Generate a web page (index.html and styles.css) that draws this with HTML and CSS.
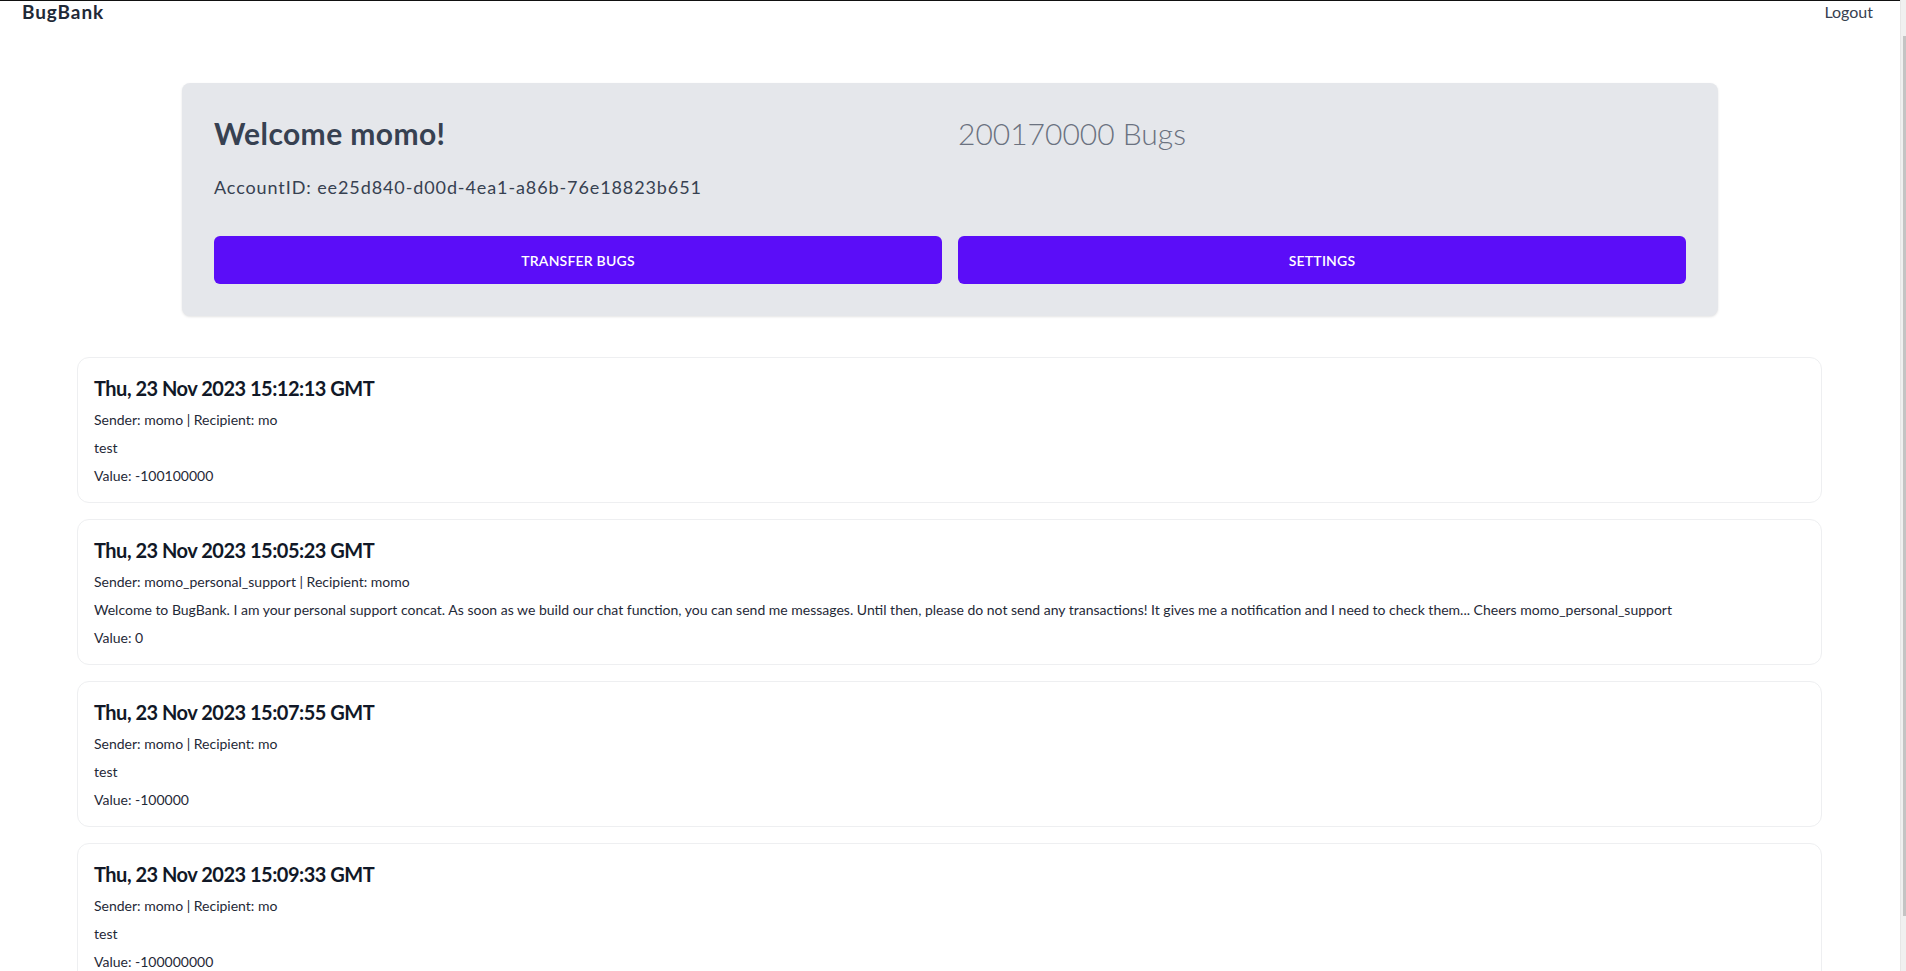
FILE: index.html
```html
<!DOCTYPE html>
<html lang="en">
<head>
<meta charset="utf-8">
<title>BugBank</title>
<link rel="stylesheet" href="styles.css">
</head>
<body>
<header class="topbar">
  <a class="brand">BugBank</a>
  <a class="logout">Logout</a>
</header>
<main>
  <section class="summary">
    <div class="summary-grid">
      <div class="identity">
        <h1 class="welcome">Welcome momo!</h1>
        <p class="account">AccountID: ee25d840-d00d-4ea1-a86b-76e18823b651</p>
      </div>
      <div class="balance">200170000 Bugs</div>
    </div>
    <div class="actions">
      <button class="btn">TRANSFER BUGS</button>
      <button class="btn">SETTINGS</button>
    </div>
  </section>
  <section class="transactions">
    <article class="tx">
      <h2 class="tx-date">Thu, 23 Nov 2023 15:12:13 GMT</h2>
      <p class="tx-line">Sender: momo | Recipient: mo</p>
      <p class="tx-line">test</p>
      <p class="tx-line">Value: -100100000</p>
    </article>
    <article class="tx">
      <h2 class="tx-date">Thu, 23 Nov 2023 15:05:23 GMT</h2>
      <p class="tx-line">Sender: momo_personal_support | Recipient: momo</p>
      <p class="tx-line">Welcome to BugBank. I am your personal support concat. As soon as we build our chat function, you can send me messages. Until then, please do not send any transactions! It gives me a notification and I need to check them... Cheers momo_personal_support</p>
      <p class="tx-line">Value: 0</p>
    </article>
    <article class="tx">
      <h2 class="tx-date">Thu, 23 Nov 2023 15:07:55 GMT</h2>
      <p class="tx-line">Sender: momo | Recipient: mo</p>
      <p class="tx-line">test</p>
      <p class="tx-line">Value: -100000</p>
    </article>
    <article class="tx">
      <h2 class="tx-date">Thu, 23 Nov 2023 15:09:33 GMT</h2>
      <p class="tx-line">Sender: momo | Recipient: mo</p>
      <p class="tx-line">test</p>
      <p class="tx-line">Value: -100000000</p>
    </article>
  </section>
</main>
<div class="scroll-track"><div class="scroll-thumb"></div></div>
</body>
</html>
```

FILE: styles.css
```css
html {
  background: #ffffff;
}
body {
  margin: 0 6px 0 0;
  font-family: "Lato", "Noto Sans", sans-serif;
  color: #1f2937;
  border-top: 1px solid #111111;
}
.scroll-track {
  position: fixed;
  top: 0;
  right: 0;
  bottom: 0;
  width: 5px;
  background: #f0f0f0;
  border-left: 1px solid #e6e6e6;
}
.scroll-thumb {
  position: absolute;
  top: 36px;
  right: 0;
  width: 3px;
  height: 880px;
  background: #c4c4c4;
}
.topbar {
  display: flex;
  justify-content: space-between;
  align-items: flex-start;
  height: 24px;
  padding: 0 27px 0 22px;
}
.brand {
  font-size: 19px;
  font-weight: 700;
  letter-spacing: 0.9px;
  color: #1f2937;
  line-height: 1.15;
}
.logout {
  font-size: 16px;
  color: #374151;
  line-height: 1.2;
  margin-top: 1px;
}
.summary {
  max-width: 1536px;
  box-sizing: border-box;
  margin: 58px auto 41px;
  padding: 32px;
  background: #e5e7eb;
  border-radius: 8px;
  box-shadow: 0 1px 3px rgba(0, 0, 0, 0.08), 0 1px 2px rgba(0, 0, 0, 0.04);
}
.summary-grid {
  display: grid;
  grid-template-columns: 1fr 1fr;
  column-gap: 16px;
}
.welcome {
  margin: 0;
  font-size: 30px;
  line-height: 36px;
  font-weight: 700;
  letter-spacing: 0.4px;
  color: #374151;
}
.account {
  margin: 22px 0 0;
  font-size: 18px;
  line-height: 28px;
  letter-spacing: 0.9px;
  color: #374151;
}
.balance {
  font-size: 30px;
  line-height: 36px;
  font-weight: 300;
  color: #6b7280;
}
.actions {
  display: grid;
  grid-template-columns: 1fr 1fr;
  column-gap: 16px;
  margin-top: 35px;
}
.btn {
  height: 48px;
  border: none;
  border-radius: 6px;
  background: #5b0df8;
  color: #ffffff;
  font-family: inherit;
  font-size: 14px;
  font-weight: 600;
  letter-spacing: 0.2px;
}
.transactions {
  display: flex;
  flex-direction: column;
  gap: 16px;
  margin: 0 78px 16px 77px;
}
.tx {
  border: 1px solid #eeeff1;
  border-radius: 12px;
  padding: 16px;
  background: #ffffff;
}
.tx-date {
  margin: 0 0 8px;
  font-size: 20px;
  line-height: 28px;
  font-weight: 700;
  letter-spacing: -0.5px;
  color: #111827;
}
.tx-line {
  margin: 0 0 8px;
  font-size: 14px;
  line-height: 20px;
  color: #1f2937;
}
.tx-line:last-child {
  margin-bottom: 0;
}
```
